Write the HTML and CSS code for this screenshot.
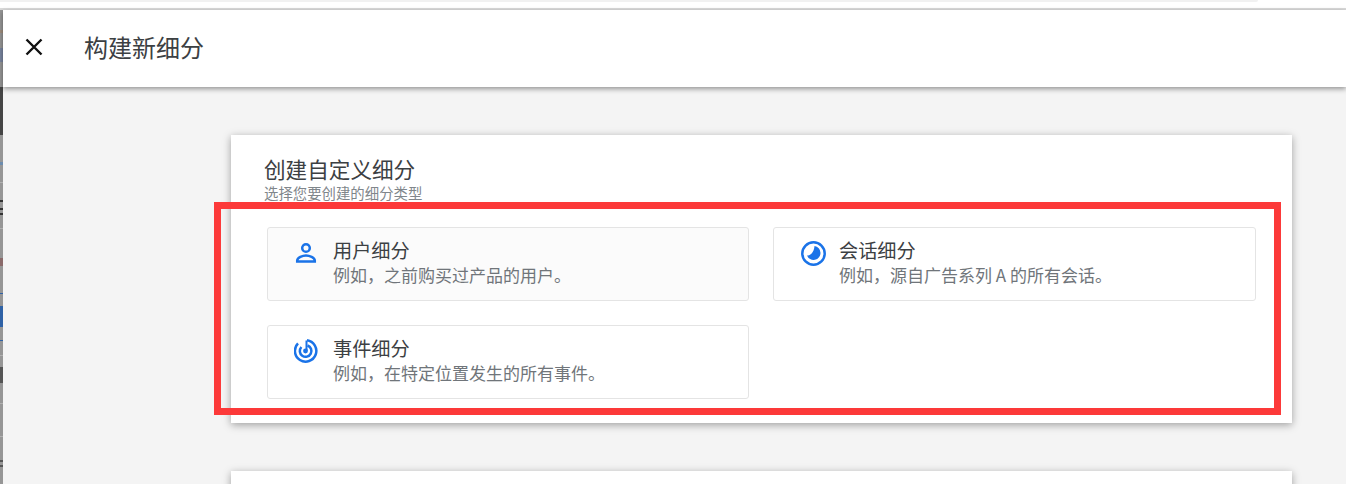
FILE: index.html
```html
<!DOCTYPE html>
<html lang="zh-CN">
<head>
<meta charset="utf-8">
<title>构建新细分</title>
<link rel="stylesheet" href="styles.css">
</head>
<body>
<div class="topstrip"><div class="topstrip-fill"></div></div>
<div class="workspace">
  <div class="behind"></div>
  <div class="panel">
    <header class="panel-header">
      <svg class="close-icon" viewBox="0 0 20 20" aria-hidden="true"><path d="M2.500 2.500L17.500 17.500M17.500 2.500L2.500 17.500"/></svg>
      <h1 class="panel-title">构建新细分</h1>
    </header>
    <main class="panel-body">
      <section class="card">
        <h2 class="card-title">创建自定义细分</h2>
        <p class="card-sub">选择您要创建的细分类型</p>
        <div class="options">
          <div class="option option-hover">
            <svg class="option-icon" viewBox="0 0 26 26" aria-hidden="true"><circle class="icon-line" cx="12" cy="7" r="3.800"/><path class="icon-line" d="M3.200 20.500v-1c0-3 5.500-5 8.800-5s8.800 2 8.800 5v1z"/></svg>
            <div class="option-text">
              <div class="option-name">用户细分</div>
              <div class="option-desc">例如，之前购买过产品的用户。</div>
            </div>
          </div>
          <div class="option">
            <svg class="option-icon" viewBox="0 0 26 26" aria-hidden="true"><circle class="icon-line" cx="13.500" cy="12.500" r="11.200"/><path class="icon-fill" d="M14.500 5a7 7 0 1 1-7.500 9.500c3.500 0 7-3 7.500-9.500z"/></svg>
            <div class="option-text">
              <div class="option-name">会话细分</div>
              <div class="option-desc">例如，源自广告系列 A 的所有会话。</div>
            </div>
          </div>
          <div class="option">
            <svg class="option-icon" viewBox="0 0 26 26" aria-hidden="true"><path class="icon-line" d="M13 1.300A10.700 10.700 0 1 1 4 4.400"/><path class="icon-line" d="M13.500 6.500A5.800 5.800 0 1 1 7.400 8"/><path class="icon-line icon-stem" d="M12.500 1.500V12"/><circle class="icon-fill" cx="11.500" cy="12" r="2.400"/></svg>
            <div class="option-text">
              <div class="option-name">事件细分</div>
              <div class="option-desc">例如，在特定位置发生的所有事件。</div>
            </div>
          </div>
        </div>
      </section>
      <section class="card card-next"></section>
    </main>
  </div>
</div>
<div class="highlight"></div>
</body>
</html>
```
FILE: styles.css
```css
* { box-sizing: border-box; }
html, body { margin: 0; padding: 0; height: 100%; overflow: hidden; }
body {
  background: #fff;
  font-family: "Noto Sans CJK SC", "Liberation Sans", sans-serif;
  color: #202124;
}
.topstrip {
  height: 10px;
  background: #fff;
  border-bottom: 2px solid #dadada;
}
.topstrip-fill {
  width: 1258px;
  height: 2px;
  background: #f1f1f1;
  border-bottom-right-radius: 4px;
}
.workspace { display: flex; height: 474px; }
.behind {
  width: 3px;
  flex: none;
  background: linear-gradient(to bottom,
    #969696 0 20px, #a08f7f 20px 23px, #969696 23px 38px, #7a86a0 38px 52px, #969696 52px 77px,
    #454545 77px 125px, #969696 125px 152px, #6c8cae 152px 155px, #969696 155px 172px,
    #b0b0b0 172px 173px, #969696 173px 190px, #333 190px 192px, #969696 192px 198px,
    #333 198px 200px, #969696 200px 203px, #333 203px 205px, #969696 205px 218px,
    #b0b0b0 218px 219px, #969696 219px 248px, #8a6a6a 248px 256px, #969696 256px 283px,
    #2f62a6 283px 284px, #969696 284px 296px, #2f62a6 296px 317px, #969696 317px 330px,
    #2f62a6 330px 331px, #969696 331px 345px, #b0b0b0 345px 346px, #969696 346px 357px,
    #555 357px 373px, #969696 373px 393px, #b0b0b0 393px 394px, #969696 394px 426px,
    #b0b0b0 426px 427px, #969696 427px 450px, #555 450px 452px, #969696 452px 455px,
    #555 455px 457px, #969696 457px);
}
.panel { flex: 1; display: flex; flex-direction: column; min-width: 0; }
.panel-header {
  position: relative;
  z-index: 1;
  flex: none;
  display: flex;
  align-items: center;
  height: 77px;
  padding: 0 0 3px 21px;
  background: #fff;
  box-shadow: 0 2px 5px rgba(0, 0, 0, .4);
}
.close-icon {
  width: 20px;
  height: 20px;
  margin-right: 40px;
  fill: none;
  stroke: #111;
  stroke-width: 2.400;
}
.panel-title {
  margin: 0;
  font-size: 24px;
  line-height: 30px;
  font-weight: 400;
  color: #3c4043;
}
.panel-body {
  flex: 1;
  background: #f4f4f4;
  padding: 48px 54px 0 228px;
  overflow: hidden;
}
.card {
  background: #fff;
  height: 288px;
  padding: 20px 36px 0;
  box-shadow: 0 2px 8px rgba(0, 0, 0, .35);
}
.card-next { margin-top: 48px; }
.card-title {
  margin: 0 0 0 -3px;
  font-size: 21.600px;
  line-height: 28px;
  font-weight: 400;
  color: #3c4043;
}
.card-sub {
  margin: 0 0 0 -3px;
  font-size: 14.400px;
  line-height: 20px;
  color: #80868b;
}
.options {
  display: grid;
  grid-template-columns: 482px 483px;
  grid-auto-rows: 74px;
  column-gap: 24px;
  row-gap: 24px;
  margin-top: 24px;
}
.option {
  display: flex;
  align-items: flex-start;
  padding: 9px 0 0 26px;
  border: 1px solid #e4e4e4;
  border-radius: 3px;
  background: #fff;
}
.option-hover { background: #fbfbfb; }
.option-icon {
  flex: none;
  width: 26px;
  height: 26px;
  margin-top: 4px;
}
.icon-line {
  fill: none;
  stroke: #1a73e8;
  stroke-width: 2.500;
}
.icon-stem { stroke-width: 2; }
.icon-fill { fill: #1a73e8; }
.option-text { margin-left: 13px; }
.option-name {
  font-size: 19.200px;
  line-height: 26px;
  color: #3c4043;
}
.option-desc {
  font-size: 17px;
  line-height: 24px;
  color: #70757a;
}
.highlight {
  position: absolute;
  left: 214px;
  top: 202px;
  width: 1067px;
  height: 213px;
  border: 7px solid #fc3939;
  pointer-events: none;
  z-index: 2;
}
```
